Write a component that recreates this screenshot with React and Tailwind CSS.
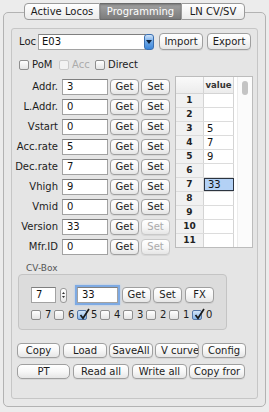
import React from 'react';

const font = "font-['DejaVu_Sans',sans-serif]";

const Btn = ({ w, children, disabled, h = 'h-[16px]', className = '' }) => (
  <div
    className={`${h} ${w} shrink-0 rounded-[4px] border flex items-center justify-center overflow-hidden whitespace-nowrap bg-linear-to-b from-white via-[#f7f7f7] to-[#e6e6e6] shadow-[0_1px_0_rgba(0,0,0,0.06)] ${
      disabled ? 'text-[#ababab] border-[#c8c8c8]' : 'text-[#1c1c1c] border-[#9f9f9f]'
    } ${className}`}
  >
    {children}
  </div>
);

const Check = ({ checked, disabled }) => (
  <span
    className={`relative inline-block shrink-0 w-[10px] h-[10px] rounded-[2px] border ${
      disabled
        ? 'border-[#cacaca] bg-[#f2f2f2]'
        : checked
        ? 'border-[#5577a8] bg-linear-to-b from-[#d3e5f8] to-[#86b6ea]'
        : 'border-[#8e8e8e] bg-linear-to-b from-white to-[#e4e4e4]'
    }`}
  >
    {checked && (
      <svg className="absolute left-[1px] -top-[3px]" width="11" height="12" viewBox="0 0 11 12">
        <path d="M1.5 7 L4 10.2 L10 1" stroke="#1a1a1a" strokeWidth="1.7" fill="none" />
      </svg>
    )}
  </span>
);

const Field = ({ w, value, className = '' }) => (
  <div
    className={`h-[16px] ${w} shrink-0 bg-white border border-[#a2a2a2] border-t-[#7f7f7f] flex items-center pl-[4px] text-[#111] ${className}`}
  >
    {value}
  </div>
);

const rows = [
  ['Addr.', '3', true],
  ['L.Addr.', '0', true],
  ['Vstart', '0', true],
  ['Acc.rate', '5', true],
  ['Dec.rate', '7', true],
  ['Vhigh', '9', true],
  ['Vmid', '0', true],
  ['Version', '33', false],
  ['Mfr.ID', '0', false],
];

const cvValues = ['', '', '5', '7', '9', '', '33', '', '', '', ''];

const bits = [
  ['7', false],
  ['6', false],
  ['5', true],
  ['4', false],
  ['3', false],
  ['2', false],
  ['1', false],
  ['0', true],
];

export default function App() {
  return (
    <div className={`w-[269px] h-[412px] bg-[#ececec] overflow-hidden text-[10px] leading-none ${font} pt-[12px]`}>
      {/* Tabbed frame */}
      <div className="ml-[3px] w-[263px] h-[395px] border border-[#b3b3b3] rounded-[5px] bg-[#e8e8e8] px-[7px] pb-[7px]">
        <div className="flex justify-center -mt-[10px] relative">
          <div className="h-[17px] w-[76px] rounded-l-[4px] border border-[#9a9a9a] bg-linear-to-b from-white to-[#ebebeb] flex items-center justify-center text-[#1a1a1a]">
            Active Locos
          </div>
          <div className="h-[17px] w-[81px] border-y border-[#6a6a6a] bg-linear-to-b from-[#a2a2a2] to-[#7c7c7c] flex items-center justify-center text-white shadow-[inset_0_1px_2px_rgba(0,0,0,0.25)]">
            Programming
          </div>
          <div className="h-[17px] w-[64px] rounded-r-[4px] border border-[#9a9a9a] bg-linear-to-b from-white to-[#ebebeb] flex items-center justify-center text-[#1a1a1a]">
            LN CV/SV
          </div>
        </div>

        {/* Programming panel */}
        <div className="mt-[8px] h-[371px] border border-[#c6c6c6] rounded-[3px] bg-[#e5e5e5] flex flex-col text-[#1c1c1c]">
          {/* Loc row */}
          <div className="mt-[4px] h-[17px] pl-[7px] flex items-center">
            <span className="w-[19px]">Loc</span>
            <div className="relative w-[116px] h-[17px] flex items-center">
              <div className="h-[16px] w-[108px] bg-white border border-[#a2a2a2] border-t-[#7f7f7f] flex items-center pl-[3px] text-[#111]">
                E03
              </div>
              <div className="-ml-[2px] w-[10px] h-[16px] rounded-[3px] border border-[#3b6fb0] bg-linear-to-b from-[#cfe3f9] via-[#6aa6e6] to-[#3c86d9] flex items-center justify-center">
                <svg width="6" height="4" viewBox="0 0 6 4">
                  <path d="M0 0 H6 L3 4 Z" fill="#0d2340" />
                </svg>
              </div>
            </div>
            <Btn w="w-[44px]" h="h-[17px]" className="ml-[5px]">Import</Btn>
            <Btn w="w-[44px]" h="h-[17px]" className="ml-[4px]">Export</Btn>
          </div>

          {/* Mode checkboxes */}
          <div className="mt-[9px] h-[12px] pl-[7px] flex items-center">
            <div className="w-[40px] flex items-center gap-[3px]">
              <Check />
              <span>PoM</span>
            </div>
            <div className="w-[36px] flex items-center gap-[3px] text-[#ababab]">
              <Check disabled />
              <span>Acc</span>
            </div>
            <div className="flex items-center gap-[3px]">
              <Check />
              <span>Direct</span>
            </div>
          </div>

          {/* CV rows + table */}
          <div className="mt-[5px] flex">
            <div className="pt-[3px] flex flex-col gap-[4px]">
              {rows.map(([label, value, canSet]) => (
                <div key={label} className="h-[16px] flex items-center">
                  <span className="w-[46px] text-right whitespace-nowrap">{label}</span>
                  <Field w="w-[46px]" value={value} className="ml-[4px]" />
                  <Btn w="w-[29px]" className="ml-[2px]">Get</Btn>
                  <Btn w="w-[29px]" className="ml-[2px]" disabled={!canSet}>Set</Btn>
                </div>
              ))}
            </div>

            <div className="ml-[5px] w-[78px] h-[172px] border border-[#bcbcbc] bg-white flex overflow-hidden">
              <div className="w-[58px] flex flex-col">
                <div className="h-[17px] flex shrink-0 border-b border-[#d4d4d4]">
                  <div className="w-[28px] bg-linear-to-b from-[#fafafa] to-[#ececec] border-r border-[#d4d4d4]" />
                  <div className="w-[30px] bg-linear-to-b from-[#fafafa] to-[#ececec] border-r border-[#d4d4d4] flex items-center justify-center text-[8.5px] font-bold text-[#333]">
                    value
                  </div>
                </div>
                {cvValues.map((v, i) => (
                  <div key={i} className="h-[14px] flex shrink-0 border-b border-[#dcdcdc]">
                    <div className="w-[28px] bg-[#f1f1f1] border-r border-[#d4d4d4] flex items-center justify-center text-[9px] font-bold text-[#222]">
                      {i + 1}
                    </div>
                    <div
                      className={`w-[30px] flex items-center pl-[3px] text-[#111] ${
                        i === 6
                          ? 'bg-[#b3d1f5] border border-[#2c3440]'
                          : 'border-r border-[#d4d4d4]'
                      }`}
                    >
                      {v}
                    </div>
                  </div>
                ))}
              </div>
              <div className="w-[4px] border-r border-[#ececec]" />
              <div className="flex-1 bg-[#fbfbfb] flex justify-center">
                <div className="mt-[4px] w-[6px] h-[14px] rounded-full bg-[#c4c4c4]" />
              </div>
            </div>
          </div>

          {/* CV-Box */}
          <div className="mt-[8px] h-[11px] pl-[14px] text-[9px] text-[#555] flex items-center">CV-Box</div>
          <div className="ml-[6px] w-[209px] h-[56px] border border-[#c4c4c4] rounded-[4px] bg-[#dcdcdc] flex flex-col">
            <div className="mt-[11px] h-[18px] pl-[12px] flex items-center">
              <Field w="w-[25px]" value="7" />
              <div className="ml-[4px] w-[7px] h-[15px] rounded-[3px] border border-[#9a9a9a] bg-linear-to-b from-white to-[#e8e8e8] flex flex-col items-center justify-center gap-[2px]">
                <svg width="3" height="2" viewBox="0 0 3 2">
                  <path d="M0 2 L1.5 0 L3 2 Z" fill="#333" />
                </svg>
                <svg width="3" height="2" viewBox="0 0 3 2">
                  <path d="M0 0 L1.5 2 L3 0 Z" fill="#333" />
                </svg>
              </div>
              <Field
                w="w-[41px]"
                value="33"
                className="ml-[10px] shadow-[0_0_0_2px_#7eaae3,0_0_2px_2px_#a9c8ee]"
              />
              <Btn w="w-[29px]" className="ml-[4px]">Get</Btn>
              <Btn w="w-[29px]" className="ml-[2px]">Set</Btn>
              <Btn w="w-[29px]" className="ml-[3px]">FX</Btn>
            </div>
            <div className="mt-[6px] h-[10px] pl-[12px] flex items-center">
              {bits.map(([b, on]) => (
                <div key={b} className="w-[23px] flex items-center gap-[4px] shrink-0">
                  <Check checked={on} />
                  <span>{b}</span>
                </div>
              ))}
            </div>
          </div>

          {/* Bottom buttons */}
          <div className="mt-[13px] pl-[5px] flex items-center">
            <Btn w="w-[43px]" h="h-[15px]">Copy</Btn>
            <Btn w="w-[44px]" h="h-[15px]" className="ml-[3px]">Load</Btn>
            <Btn w="w-[44px]" h="h-[15px]" className="ml-[2px]">SaveAll</Btn>
            <Btn w="w-[44px]" h="h-[15px]" className="ml-[2px] justify-start pl-[5px]">V curve</Btn>
            <Btn w="w-[44px]" h="h-[15px]" className="ml-[3px]">Config</Btn>
          </div>
          <div className="mt-[6px] pl-[5px] flex items-center">
            <Btn w="w-[53px]" h="h-[15px]" className="rounded-[5px] border-[#7d7d7d]">PT</Btn>
            <Btn w="w-[56px]" h="h-[15px]" className="ml-[3px]">Read all</Btn>
            <Btn w="w-[55px]" h="h-[15px]" className="ml-[3px]">Write all</Btn>
            <Btn w="w-[56px]" h="h-[15px]" className="ml-[2px] justify-start pl-[4px]">Copy fror</Btn>
          </div>
        </div>
      </div>
    </div>
  );
}
